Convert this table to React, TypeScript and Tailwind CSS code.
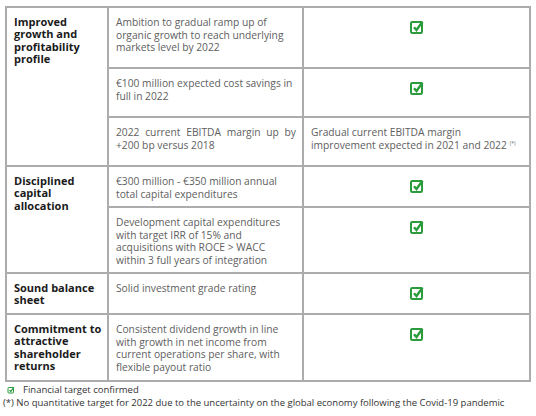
const Check = ({ small = false }: { small?: boolean }) => (
  <svg
    width={small ? 8 : 16}
    height={small ? 8 : 16}
    viewBox="0 0 16 16"
    className="inline-block"
  >
    <rect x="2" y="3" width="11" height="11" rx="1.2" fill="none" stroke="#2b9b3c" strokeWidth="2" />
    <path d="M5 8.2 L7.5 11 L13.5 2.6" fill="none" stroke="#2b9b3c" strokeWidth="2.4" strokeLinejoin="miter" strokeLinecap="butt" />
  </svg>
)

type Row = {
  label?: string
  span?: number
  target: string
  status: "check" | string
  h: string
  justify?: boolean
}

const rows: Row[] = [
  {
    label: "Improved growth and profitability profile",
    span: 3,
    target: "Ambition to gradual ramp up of organic growth to reach underlying markets level by 2022",
    status: "check",
    h: "h-[61px]",
  },
  { target: "€100 million expected cost savings in full in 2022", status: "check", h: "h-[49px]" },
  {
    target: "2022 current EBITDA margin up by +200 bp versus 2018",
    status: "Gradual current EBITDA margin improvement expected in 2021 and 2022",
    h: "h-[49px]",
    justify: true,
  },
  {
    label: "Disciplined capital allocation",
    span: 2,
    target: "€300 million - €350 million annual total capital expenditures",
    status: "check",
    h: "h-[41px]",
  },
  {
    target: "Development capital expenditures with target IRR of 15% and acquisitions with ROCE > WACC within 3 full years of integration",
    status: "check",
    h: "h-[66px]",
  },
  { label: "Sound balance sheet", span: 1, target: "Solid investment grade rating", status: "check", h: "h-[41px]" },
  {
    label: "Commitment to attractive shareholder returns",
    span: 1,
    target: "Consistent dividend growth in line with growth in net income from current operations per share, with flexible payout ratio",
    status: "check",
    h: "h-[67px]",
  },
]

export default function App() {
  return (
    <div className="w-[536px] h-[416px] bg-white font-['Open_Sans',sans-serif] pt-[6px] pl-[5px]">
      <table className="border-collapse w-[524px] table-fixed">
        <colgroup>
          <col className="w-[102px]" />
          <col className="w-[195px]" />
          <col className="w-[227px]" />
        </colgroup>
        <tbody>
          {rows.map((r, i) => (
            <tr key={i} className={r.h}>
              {r.label && (
                <td
                  rowSpan={r.span}
                  className="border-2 border-[#acacac] align-top pl-[7px] pr-[2px] pt-[8px] text-[11px] leading-[12.4px] font-bold text-[#1a1a1a]"
                >
                  {r.label}
                </td>
              )}
              <td
                className={`border-2 border-[#acacac] align-top pl-[7px] pr-[6px] pt-[8px] pb-0 text-[10.25px] leading-[12.7px] text-[#606060] ${r.justify ? "text-justify" : ""}`}
              >
                {r.target}
              </td>
              <td className="border-2 border-[#acacac] align-top pl-[7px] pr-[6px] pt-[8px] pb-0 text-[10.25px] leading-[12.7px] text-[#606060]">
                {r.status === "check" ? (
                  <div className="flex justify-center pt-[3px]">
                    <Check />
                  </div>
                ) : (
                  <span>
                    {r.status}
                    <span className="relative -top-[4px] ml-[3px] text-[5px]">(*)</span>
                  </span>
                )}
              </td>
            </tr>
          ))}
        </tbody>
      </table>
      <div className="text-[9.5px] leading-[13px] text-[#333] mt-[1px] -ml-[2px]">
        <div className="flex items-center pl-[4px]">
          <Check small />
          <span className="ml-[8px]">Financial target confirmed</span>
        </div>
        <div className="whitespace-nowrap">(*) No quantitative target for 2022 due to the uncertainty on the global economy following the Covid-19 pandemic</div>
      </div>
    </div>
  )
}
